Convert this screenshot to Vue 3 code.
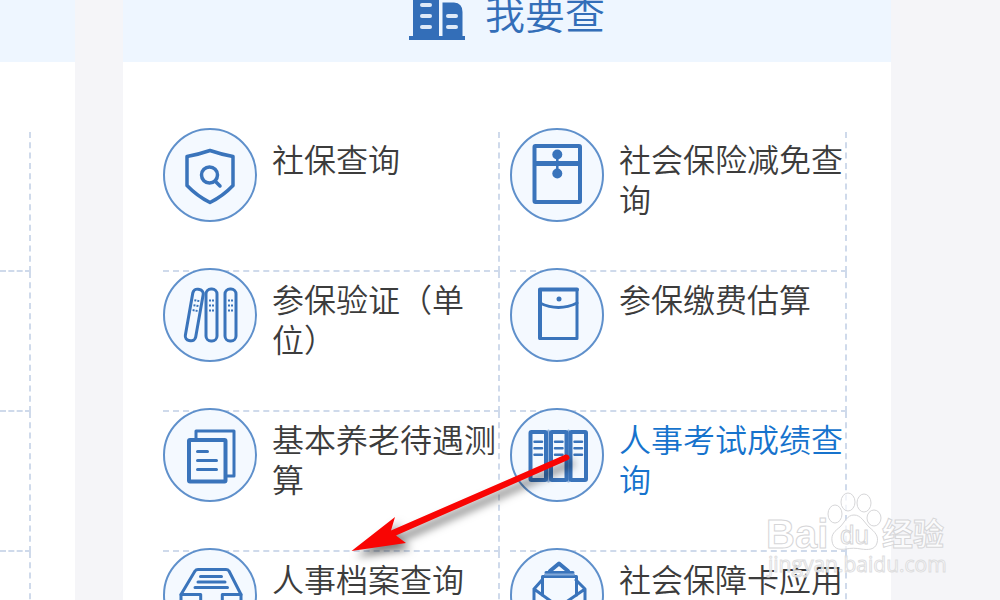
<script setup>
const items = [
  { text: '社保查询', icon: 'shield' },
  { text: '社会保险减免查询', icon: 'folder' },
  { text: '参保验证（单位）', icon: 'binders' },
  { text: '参保缴费估算', icon: 'envelope' },
  { text: '基本养老待遇测算', icon: 'docs' },
  { text: '人事考试成绩查询', icon: 'archive', active: true },
  { text: '人事档案查询', icon: 'tray' },
  { text: '社会保障卡应用', icon: 'mail' }
]
</script>

<template>
  <div class="page">
    <section class="panel side">
      <header class="head"></header>
      <div class="side-cells">
        <div v-for="n in 4" :key="n" class="cell"></div>
      </div>
    </section>

    <main class="panel main">
      <header class="head">
        <svg class="building" viewBox="0 0 56 40" aria-hidden="true">
          <path fill="#336eb8" d="M4 0H30V36H33.500V2.500H45Q53.500 3 53.500 12V36H56V40H0V36H4Z" />
          <g fill="#dfeaf8">
            <rect x="11" y="3" width="12" height="4" rx="2" />
            <rect x="11" y="14" width="12" height="4" rx="2" />
            <rect x="11" y="25" width="12" height="4" rx="2" />
            <rect x="37" y="14" width="12" height="4" rx="2" />
            <rect x="37" y="25" width="12" height="4" rx="2" />
          </g>
        </svg>
        <h1 class="title">我要查</h1>
      </header>
      <nav class="grid">
        <a v-for="item in items" :key="item.text" href="#" class="cell link" :class="{ active: item.active }">
          <svg class="icon" viewBox="0 0 94 94" aria-hidden="true">
            <circle cx="47" cy="47" r="46" fill="#f4f9ff" stroke="#5f90cb" stroke-width="2" />
            <g v-if="item.icon === 'shield'" class="ink" stroke-width="3.500">
              <path d="M47 22.500Q57 26 70 28.500V57.500Q60 68 47 74.500Q34 68 24 57.500V28.500Q37 26 47 22.500Z" />
              <circle cx="46.500" cy="47" r="8" />
              <path d="M52 53L57 58" />
            </g>
            <g v-else-if="item.icon === 'folder'" class="ink" stroke-width="4">
              <rect x="24.500" y="18" width="45.500" height="56" rx="1" />
              <path d="M26 35.500H69" stroke-width="5" stroke-linecap="butt" />
              <path d="M47.300 27V46" stroke-width="2.500" />
              <circle cx="47.300" cy="26.500" r="5" class="solid" />
              <circle cx="47.300" cy="45.500" r="5" class="solid" />
            </g>
            <g v-else-if="item.icon === 'binders'" class="ink" stroke-width="3">
              <g transform="rotate(10 31.500 47)">
                <rect x="26" y="21" width="10.500" height="52" rx="4.500" />
                <path class="dots" d="M28.800 32.500H33.800M28.800 37.500H33.800M28.800 42.500H33.800" />
              </g>
              <rect x="43" y="21" width="11" height="52" rx="5" fill="#f4f9ff" />
              <rect x="62" y="21" width="11" height="52" rx="5" />
              <path class="dots" d="M46 32.500H51M46 37.500H51M46 42.500H51M65 32.500H70M65 37.500H70M65 42.500H70" />
            </g>
            <g v-else-if="item.icon === 'envelope'" class="ink" stroke-width="3">
              <rect x="30" y="21.500" width="37" height="49" />
              <path d="M30 22V70M30 21.500H67" stroke-width="4" />
              <path d="M30 35Q39 39.500 48.500 39.500T67 35" />
              <circle cx="49" cy="31" r="2.500" class="solid" />
            </g>
            <g v-else-if="item.icon === 'docs'" class="ink" stroke-width="3">
              <path d="M33 31V23H71V68H64" />
              <rect x="26" y="32" width="36.500" height="41.500" rx="1" stroke-width="4" />
              <path d="M34.500 43.500H44.500M34.500 52.500H53.500M34.500 61.500H53.500" />
            </g>
            <g v-else-if="item.icon === 'archive'" class="ink" stroke-width="4">
              <path d="M38.500 23V73M58.500 23V73" stroke="#8fb1dc" stroke-width="3" />
              <rect x="20.500" y="24" width="15.500" height="48" rx="1" />
              <rect x="41" y="24" width="15.500" height="48" rx="1" />
              <rect x="60.500" y="24" width="15.500" height="48" rx="1" />
              <path d="M24.500 33.700H32M24.500 40.300H32M24.500 46.700H32M45 33.700H52.500M45 40.300H52.500M45 46.700H52.500M64.500 33.700H72M64.500 40.300H72M64.500 46.700H72" stroke-width="2.500" />
            </g>
            <g v-else-if="item.icon === 'tray'" class="ink" stroke-width="3">
              <path d="M18 46.500L32 23Q33 21.500 35 21.500H63Q65 21.500 66 23L78 46.500V70H18Z" />
              <path d="M18 46.500H37.700V57H59.300V46.500H78" />
              <path d="M37.500 28.500H58.500M35 34H62M32 39.500H64.500" />
            </g>
            <g v-else class="ink" stroke-width="3">
              <path d="M24 72V41L32 32M75 72V41L66 32M24 41L49 59L75 41V72H24" />
              <path d="M32.500 47V29M66.500 47V29M32.500 28.500H66.500M36 24.500H63" />
              <path d="M40 23L49 15.500L58 23" stroke-width="4" />
              <path d="M35 26.500H64" stroke="#83a9d9" stroke-width="2" />
            </g>
          </svg>
          <span class="label">{{ item.text }}</span>
        </a>
      </nav>
    </main>

    <svg class="arrow" viewBox="0 0 230 110" aria-hidden="true">
      <path d="M11.500 101L55 67L51 80.500L225.500 4.500Q229 4 229.500 7Q230 9 228 10L56 85.500L66 93Z" fill="#f90503" />
    </svg>

    <svg class="mark" viewBox="0 0 190 96" aria-hidden="true">
      <text x="3" y="58" class="bai">Bai</text>
      <ellipse cx="72" cy="24" rx="7" ry="9" />
      <ellipse cx="85" cy="12" rx="7" ry="9" />
      <ellipse cx="101" cy="13" rx="7" ry="9" />
      <ellipse cx="111" cy="28" rx="7" ry="8" />
      <path d="M91 25C98 25 101 32 106 37C112 42 116 46 114 53C112 60 105 60 98 59C93 58 88 58 83 59C76 60 70 59 69 51C68 44 72 41 77 37C82 32 84 25 91 25Z" />
      <text x="77" y="54" class="du">du</text>
      <text x="119" y="55" class="exp">经验</text>
      <text x="5" y="82" class="url">jingyan.baidu.com</text>
    </svg>
  </div>
</template>

<style>
body {
  background: #f5f5f8;
}
</style>

<style scoped>
.page {
  position: relative;
  display: flex;
  gap: 48px;
  height: 100vh;
  padding-right: 109px;
  box-sizing: border-box;
  overflow: hidden;
  background: #f5f5f8;
  font-family: "Noto Sans CJK SC", "Noto Sans", sans-serif;
  font-weight: 350;
}
.panel {
  background: #fff;
}
.side {
  flex: 0 0 75px;
}
.main {
  flex: 1;
  min-width: 0;
}
.head {
  display: flex;
  justify-content: center;
  align-items: flex-start;
  gap: 20px;
  height: 62px;
  background: #eef6ff;
}
.building {
  width: 56px;
  height: 40px;
}
.title {
  margin: 0;
  font-size: 40px;
  line-height: 24px;
  font-weight: 350;
  color: #336eb8;
}
.side-cells {
  padding: 70px 44px 0 0;
}
.grid {
  display: grid;
  grid-template-columns: 1fr 1fr;
  column-gap: 10px;
  padding: 70px 44px 0 40px;
}
.cell {
  box-sizing: border-box;
  height: 140px;
  border-right: 2px dashed #cfdaeb;
  border-bottom: 2px dashed #cfdaeb;
}
.link {
  display: flex;
  align-items: flex-start;
  gap: 15px;
  color: #3c3c3c;
  text-decoration: none;
}
.link.active {
  color: #1673cd;
}
.icon {
  flex: none;
  width: 94px;
  height: 94px;
  margin-top: -4px;
}
.ink {
  fill: none;
  stroke: #3a74bb;
  stroke-linejoin: round;
  stroke-linecap: round;
}
.dots {
  stroke-width: 2;
  stroke-dasharray: 2 1;
  stroke-linecap: butt;
}
.solid {
  fill: #3a74bb;
  stroke: none;
}
.label {
  padding-top: 6px;
  font-size: 32px;
  line-height: 40px;
}
.arrow {
  position: absolute;
  left: 340px;
  top: 450px;
  width: 230px;
  height: 110px;
  overflow: visible;
  filter: drop-shadow(5px 6px 4px rgba(0, 0, 0, 0.5));
}
.mark {
  position: absolute;
  left: 763px;
  top: 490px;
  width: 190px;
  height: 96px;
  fill: rgba(255, 255, 255, 0.7);
  stroke: #d6d6d8;
  stroke-width: 1;
}
.bai {
  font: bold 40px "Liberation Sans", sans-serif;
}
.du {
  font: 26px "Liberation Sans", sans-serif;
}
.exp {
  font: bold 31px "Noto Sans CJK SC", sans-serif;
}
.url {
  font: 21px "Open Sans", sans-serif;
  stroke: #dededf;
}
</style>
